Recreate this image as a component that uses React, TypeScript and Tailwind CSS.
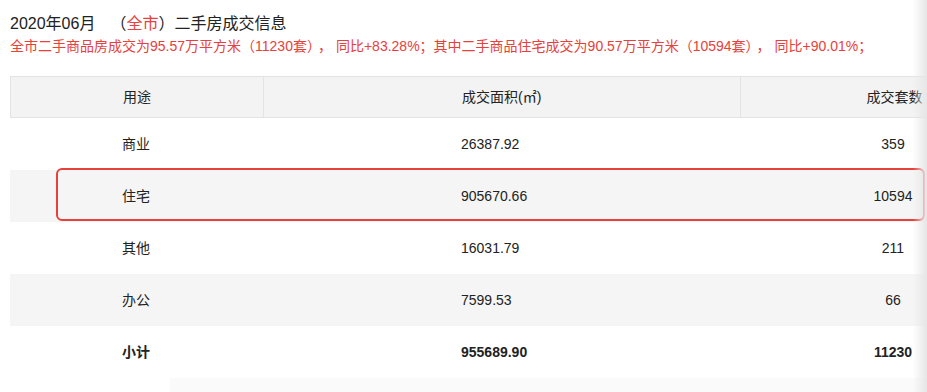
export default function App() {
  const rows = [
    { use: "商业", area: "26387.92", count: "359" },
    { use: "住宅", area: "905670.66", count: "10594" },
    { use: "其他", area: "16031.79", count: "211" },
    { use: "办公", area: "7599.53", count: "66" },
  ];

  return (
    <div className="relative h-[392px] w-[927px] overflow-hidden bg-white font-['Liberation_Sans','Noto_Sans_CJK_SC',sans-serif] text-[#222]">
      <div className="pl-[10px] pt-[13px] text-[16px] leading-[22px]">
        2020年06月
        <span className="ml-[15px]">
          （<span className="text-[#e8403a]">全市</span>）二手房成交信息
        </span>
      </div>
      <p className="mt-[1px] whitespace-nowrap pl-[10px] text-[14px] leading-[20px] text-[#e8403a]">
        全市二手商品房成交为95.57万平方米（11230套）<span className="ml-[4px] mr-[4px]">，</span>同比+83.28%；其中二手商品住宅成交为90.57万平方米（10594套）<span className="ml-[4px] mr-[4px]">，</span>同比+90.01%；
      </p>

      <div className="ml-[10px] mt-[20px] w-[1037px] text-[14px]">
        <div className="grid h-[42px] grid-cols-[252px_477px_308px] items-center border border-[#e3e3e3] bg-[#f3f3f3]">
          <div className="text-center">用途</div>
          <div className="flex h-full items-center border-l border-[#e3e3e3] pl-[198px]">成交面积(㎡)</div>
          <div className="flex h-full items-center justify-center border-l border-[#e3e3e3]">成交套数</div>
        </div>
        {rows.map((r, i) => (
          <div
            key={r.use}
            className={`grid h-[52px] grid-cols-[252px_477px_308px] items-center ${i % 2 === 1 ? "bg-[#f5f5f5]" : "bg-white"}`}
          >
            <div className="text-center">{r.use}</div>
            <div className="pl-[199px]">{r.area}</div>
            <div className="text-center">{r.count}</div>
          </div>
        ))}
        <div className="grid h-[52px] grid-cols-[252px_477px_308px] items-center font-bold">
          <div className="text-center">小计</div>
          <div className="pl-[199px]">955689.90</div>
          <div className="text-center">11230</div>
        </div>
        <div className="ml-[160px] h-[20px] bg-[#fafafa]" />
      </div>

      {/* highlight annotation */}
      <div className="absolute left-[56px] top-[168px] h-[53px] w-[869px] rounded-[6px] border-2 border-[#e8403a]" />
      {/* right scroll shadow */}
      <div className="absolute right-0 top-0 h-full w-[14px] bg-gradient-to-r from-transparent to-[#e6e6e6]" />
    </div>
  );
}
